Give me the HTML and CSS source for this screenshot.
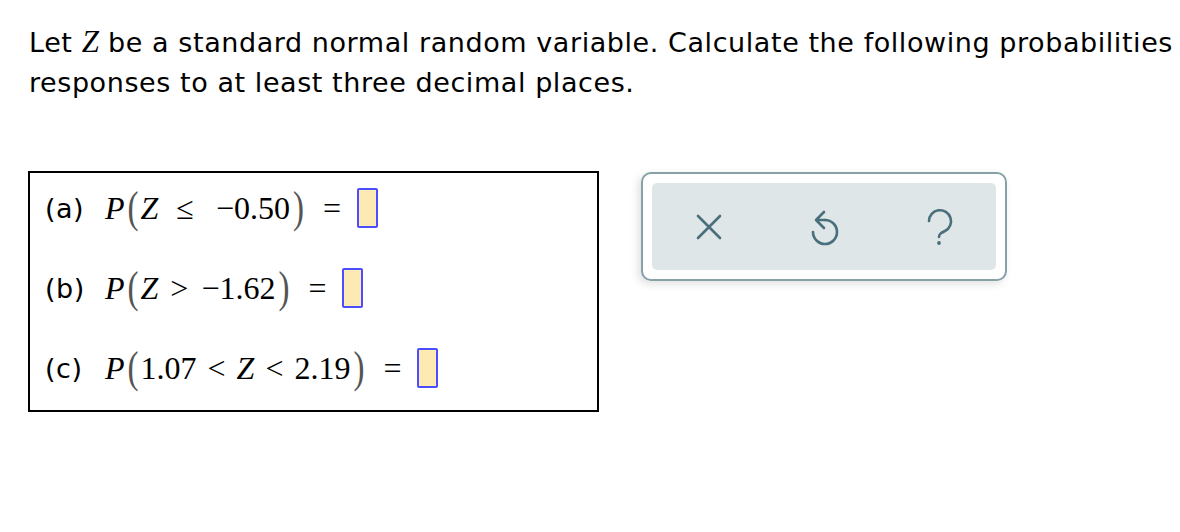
FILE: index.html
```html
<!DOCTYPE html>
<html>
<head>
<meta charset="utf-8">
<link rel="stylesheet" href="styles.css">
</head>
<body>
<div class="prompt">
  <div class="line">Let <span class="mvar">Z</span> be a standard normal random variable. Calculate the following probabilities</div>
  <div class="line">responses to at least three decimal places.</div>
</div>
<div class="main">
  <div class="qbox">
    <div class="row">
      <span class="label">(a)</span>
      <span class="math"><span class="mi">P</span><span class="paren">(</span><span class="mi">Z</span><span class="op le">≤</span><span class="mn">−0.50</span><span class="paren">)</span><span class="eq">=</span></span>
      <span class="input"></span>
    </div>
    <div class="row">
      <span class="label">(b)</span>
      <span class="math"><span class="mi">P</span><span class="paren">(</span><span class="mi">Z</span><span class="op gt">&gt;</span><span class="mn">−1.62</span><span class="paren">)</span><span class="eq">=</span></span>
      <span class="input"></span>
    </div>
    <div class="row">
      <span class="label">(c)</span>
      <span class="math"><span class="mi">P</span><span class="paren">(</span><span class="mn">1.07</span><span class="op">&lt;</span><span class="mi">Z</span><span class="op">&lt;</span><span class="mn">2.19</span><span class="paren">)</span><span class="eq">=</span></span>
      <span class="input"></span>
    </div>
  </div>
  <div class="toolbar">
    <div class="tools">
      <div class="tool">
        <svg width="26" height="26" viewBox="0 0 26 26"><path d="M2 2 L24 24 M24 2 L2 24" fill="none" stroke="#4a6f7c" stroke-width="2.6" stroke-linecap="round"/></svg>
      </div>
      <div class="tool">
        <svg width="30" height="40" viewBox="0 0 30 40"><path d="M16 13 A12 12 0 1 1 4 25" fill="none" stroke="#4a6f7c" stroke-width="2.6" stroke-linecap="round"/><path d="M15 5 L7 13 L15 21 M7 13 L16 13" fill="none" stroke="#4a6f7c" stroke-width="2.6" stroke-linecap="round" stroke-linejoin="round"/></svg>
      </div>
      <div class="tool">
        <svg width="30" height="42" viewBox="0 0 30 42"><path d="M5 15 A11 11 0 1 1 21 25 C17 27 15 28 15 31" fill="none" stroke="#4a6f7c" stroke-width="2.6" stroke-linecap="round"/><circle cx="15" cy="37" r="1.9" fill="#4a6f7c"/></svg>
      </div>
    </div>
  </div>
</div>
</body>
</html>
```
FILE: styles.css
```css
html, body {
  margin: 0;
  padding: 0;
  background: #ffffff;
}
body {
  font-family: "DejaVu Sans", Verdana, sans-serif;
  color: #000;
  overflow: hidden;
}
.prompt {
  padding: 22px 0 0 29px;
  font-size: 27px;
  letter-spacing: 0.57px;
  line-height: 40px;
  white-space: nowrap;
}
.mvar {
  font-family: "Liberation Serif", serif;
  font-style: italic;
  font-size: 31px;
  letter-spacing: 0;
}
.main {
  display: flex;
  align-items: flex-start;
  margin-top: 68px;
  padding-left: 28px;
  gap: 42px;
}
.qbox {
  box-sizing: border-box;
  width: 571px;
  border: 2px solid #000;
  padding: 15px 0 22px 15px;
  display: flex;
  flex-direction: column;
  gap: 40px;
}
.row {
  height: 40px;
  display: flex;
  align-items: center;
}
.label {
  font-size: 27px;
  letter-spacing: 0.5px;
  width: 60px;
}
.math {
  font-family: "Liberation Serif", serif;
  font-size: 32px;
  display: flex;
  align-items: center;
  white-space: nowrap;
}
.mi {
  font-style: italic;
}
.paren {
  display: inline-block;
  font-size: 33px;
  color: #555;
  transform: scaleY(1.32);
  margin: 0 2px 0 3px;
}
.op {
  margin: 0 11px;
}
.gt {
  margin: 0 13px 0 12px;
}
.le {
  margin: 0 22px 0 18px;
}
.eq {
  margin: 0 16px 0 17px;
}
.input {
  display: inline-block;
  width: 17px;
  height: 36px;
  border: 2px solid #4d4dff;
  background: #fdeab3;
  border-radius: 2px;
}
.toolbar {
  margin-top: 1px;
  width: 344px;
  height: 87px;
  padding: 9px;
  border: 2px solid #87a1a8;
  border-radius: 10px;
  background: #fff;
  box-shadow: -3px 3px 9px rgba(0, 0, 0, 0.12);
}
.tools {
  height: 100%;
  background: #dfe6e8;
  border-radius: 5px;
  display: grid;
  grid-template-columns: 1fr 1fr 1fr;
  align-items: center;
  justify-items: center;
}
.tool {
  display: flex;
  align-items: center;
  justify-content: center;
}
.tool svg {
  display: block;
}
```
